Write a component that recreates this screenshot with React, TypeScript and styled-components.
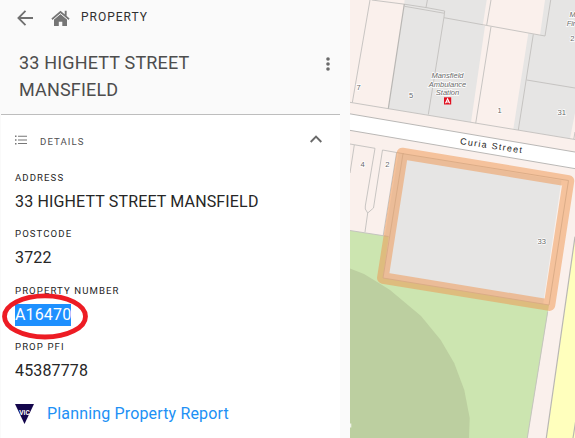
import React from "react";
import styled, { createGlobalStyle } from "styled-components";

const GlobalStyle = createGlobalStyle`
  * { box-sizing: border-box; }
  body { margin: 0; overflow: hidden; background: #fafafa; font-family: Roboto, "Liberation Sans", sans-serif; }
`;

const Page = styled.main`
  display: flex;
  width: 575px;
  height: 438px;
  overflow: hidden;
`;

const Sidebar = styled.aside`
  width: 350px;
  flex: none;
  display: flex;
  flex-direction: column;
  padding-right: 10px;
  background: #fafafa;
`;

const Toolbar = styled.header`
  display: flex;
  align-items: center;
  height: 36px;
  padding-left: 17px;
`;

const HomeSlot = styled.span`
  display: flex;
  margin: 0 11px 0 18px;
`;

const ToolbarTitle = styled.span`
  font-size: 12px;
  line-height: 16px;
  letter-spacing: 1px;
  color: #303030;
  margin-top: -3px;
`;

const TitleRow = styled.div`
  display: flex;
  justify-content: space-between;
  height: 78px;
  padding: 13px 9px 0 19px;
`;

const Title = styled.h1`
  width: 200px;
  margin: 0;
  font-size: 18px;
  font-weight: 400;
  line-height: 27px;
  letter-spacing: 0.17px;
  color: #4d4d4d;
`;

const MenuSlot = styled.span`
  margin-top: 7px;
`;

const Panel = styled.section`
  flex: 1;
  margin-left: 1px;
  padding: 0 14px;
  border-top: 1px solid #bdbdbd;
  background: #fff;
`;

const PanelHeader = styled.div`
  display: flex;
  align-items: center;
  height: 52px;
  padding-right: 4px;
`;

const ListSlot = styled.span`
  display: flex;
  margin-top: -3px;
`;

const ChevronSlot = styled.span`
  display: flex;
  margin-top: -4px;
`;

const PanelTitle = styled.span`
  flex: 1;
  margin-left: 13px;
  padding-top: 2px;
  font-size: 9.6px;
  line-height: 14px;
  letter-spacing: 1.1px;
  color: #505050;
`;

const Fields = styled.dl`
  margin: 4px 0 0;
`;

const Field = styled.div`
  height: 56.4px;
`;

const Label = styled.dt`
  font-size: 9.6px;
  line-height: 14px;
  letter-spacing: 1.08px;
  color: #1f1f1f;
`;

const Value = styled.dd<{ $selected?: boolean }>`
  position: relative;
  width: fit-content;
  margin: 6px 0 0;
  font-size: 16px;
  line-height: 22px;
  letter-spacing: 0.15px;
  white-space: nowrap;
  color: ${(p) => (p.$selected ? "#fff" : "#262626")};
  background: ${(p) => (p.$selected ? "#1e90ff" : "transparent")};
`;

const Ring = styled.svg`
  position: absolute;
  left: -14px;
  top: -12px;
  overflow: visible;
`;

const ReportLink = styled.a`
  display: flex;
  align-items: center;
  gap: 13px;
  height: 24px;
  margin-top: 5px;
  font-size: 16px;
  letter-spacing: 0.16px;
  color: #2090f5;
`;

const MapView = styled.svg`
  display: block;
  flex: none;
`;

const MapLabel = styled.text`
  font-family: "Liberation Sans", sans-serif;
  font-size: 7.6px;
  fill: #686868;
  stroke: #fff;
  stroke-width: 1.5px;
  paint-order: stroke;
  text-anchor: middle;
`;

const PlaceLabel = styled(MapLabel)`
  font-size: 7.5px;
  font-style: italic;
`;

const StreetLabel = styled.text`
  font-family: "Liberation Sans", sans-serif;
  font-size: 9px;
  letter-spacing: 1.3px;
  fill: #222;
`;

const fields = [
  { label: "ADDRESS", value: "33 HIGHETT STREET MANSFIELD" },
  { label: "POSTCODE", value: "3722" },
  { label: "PROPERTY NUMBER", value: "A16470", selected: true },
  { label: "PROP PFI", value: "45387778" },
];

const BackIcon = () => (
  <svg width="16" height="16" viewBox="0 0 16 16" fill="none" stroke="#707070" strokeWidth="1.8">
    <path d="M16 8H2M8.5 .9 1.4 8l7.1 7.1" />
  </svg>
);

const HomeIcon = () => (
  <svg width="19" height="17" viewBox="0 0 19 17" fill="#757575">
    <path d="M9.5 3.9 3 9.3V16h4.8v-4.3h3.5V16H16V9.3Z" />
    <path d="M1 9.2 9.5 2l8.5 7.2M14.7.8v5" fill="none" stroke="#757575" strokeWidth="1.9" />
    <path d="M2.1 9.9 9.5 3.7l7.4 6.2" fill="none" stroke="#fafafa" strokeWidth=".7" />
  </svg>
);

const DotsIcon = () => (
  <svg width="6" height="14" viewBox="0 0 6 14" fill="#6a6a6a">
    <circle cx="3" cy="2" r="1.8" />
    <circle cx="3" cy="7" r="1.8" />
    <circle cx="3" cy="12" r="1.8" />
  </svg>
);

const ListIcon = () => (
  <svg width="12" height="10" viewBox="0 0 12 10" fill="#777">
    <path d="M3 .8h9v1H3zM3 4.5h9v1H3zM3 8.1h9v1H3zM0 .5h1.5V2H0zM0 4.2h1.5v1.5H0zM0 7.9h1.5v1.5H0z" />
  </svg>
);

const ChevronIcon = () => (
  <svg width="12" height="8" viewBox="0 0 12 8" fill="none" stroke="#6a6a6a" strokeWidth="1.9">
    <path d="m.7 7 5.3-5.3L11.3 7" />
  </svg>
);

const VicIcon = () => (
  <svg width="19" height="20" viewBox="0 0 19 20">
    <path d="M0 0h19L9.5 20Z" fill="#14064c" />
    <text x="9.6" y="11" textAnchor="middle" fontFamily="Roboto, sans-serif" fontSize="6.5" fontWeight="700" fill="#fff">VIC</text>
  </svg>
);

const PropertyMap = () => (
  <MapView width="225" height="438" viewBox="350 0 225 438">
    <path fill="#faf0ec" d="M350 0h225v438H350z" />
    <g fill="#e6e5e4">
      <path d="M404.5 0H486.7L482.7 25.5 485 26 471 122.3 388.3 108.7 404.3 4Z" />
      <path d="M545 0h30v113l-5 25.5L513.3 129.3 528.3 33.3l11.7 2Z" />
      <path d="M398.5 153 561.5 180.5 543 305 378 278Z" />
    </g>
    <path fill="#cce5b0" d="M350 230.5 388.8 236.5 383 278 549 305 527.4 438H350Z" />
    <path fill="#bccfa0" d="m350 268.5 14 5.5 14 8.5 12 7.5 31 26 19.7 24 13.6 23.3 10 26.7 5.4 28-.7 20H350Z" />
    <path fill="#ffffbd" d="M575 236.7 546.3 438H575Z" />
    <path fill="#fff" stroke="#bab8b6" d="M349 113.7 576 152.2V168.8L349 130.2Z" />
    <g fill="none" stroke="#c2bfbd" strokeWidth=".9">
      <path d="M370 0 352.3 102.7M371.7 0 403 4l24 3.7 17.7 3.3-.7 6-15.7 97.5M404.5 6.3 444 13.2M427.4 0 426 7.5M444 17.7 545 36M491 0l-4.3 25M491 26.7 475.7 123.3M550.7 0 545 36M533.3 34.3 518.3 130M526.7 80 575 88M345 101.5 575 139.5M575 132l-1.2 7" />
      <path d="m350 144 25 4.3-9.7 57.7v3l2.4 4 5.8-5 9-58 21.5 3.8M354.3 145 350 173M367.7 213 365 232M350 230.5l38.5 6M396.5 153 383.3 235M403 153.7 568.5 180.5 549 305 383 278ZM547.7 311.7 527.3 438" />
    </g>
    <path d="M404.3 4 388.3 108.7M575 236.7 546.3 438M576 419l-3 19" fill="none" stroke="#b9b7b4" strokeWidth="1.2" />
    <path d="M402.3 153.5 568.5 180.8 549.5 305.2 382.8 278Z" fill="none" stroke="#f0944c" strokeOpacity=".5" strokeWidth="11.5" strokeLinejoin="round" />
    <MapLabel x="358.7" y="90">7</MapLabel>
    <MapLabel x="411" y="98">5</MapLabel>
    <MapLabel x="499.5" y="113">1</MapLabel>
    <MapLabel x="561.7" y="114.5">31</MapLabel>
    <MapLabel x="362.5" y="166.5">4</MapLabel>
    <MapLabel x="387.3" y="166.5">2</MapLabel>
    <MapLabel x="541.7" y="243.5">33</MapLabel>
    <MapLabel x="572.3" y="41">2</MapLabel>
    <PlaceLabel x="447.5" y="77.5">Mansfield</PlaceLabel>
    <PlaceLabel x="447.5" y="86.5">Ambulance</PlaceLabel>
    <PlaceLabel x="447.5" y="95">Station</PlaceLabel>
    <PlaceLabel x="572.5" y="17">M</PlaceLabel>
    <PlaceLabel x="571" y="25.5">Fir</PlaceLabel>
    <path fill="#e01020" d="M444 97.3h7.2v7.2H444z" />
    <path fill="none" stroke="#fff" strokeWidth="1.1" d="m445.5 103.3 2.1-4.5 2.1 4.5M446.3 102h2.6" />
    <StreetLabel transform="translate(459.8 144) rotate(8.5)">Curia Street</StreetLabel>
    <path fill="#eef3e8" d="M350 423.5h1.3v4H350z" />
  </MapView>
);

export default function App() {
  return (
    <>
      <GlobalStyle />
      <Page>
        <Sidebar>
          <Toolbar>
            <BackIcon />
            <HomeSlot><HomeIcon /></HomeSlot>
            <ToolbarTitle>PROPERTY</ToolbarTitle>
          </Toolbar>
          <TitleRow>
            <Title>33 HIGHETT STREET MANSFIELD</Title>
            <MenuSlot><DotsIcon /></MenuSlot>
          </TitleRow>
          <Panel>
            <PanelHeader>
              <ListSlot><ListIcon /></ListSlot>
              <PanelTitle>DETAILS</PanelTitle>
              <ChevronSlot><ChevronIcon /></ChevronSlot>
            </PanelHeader>
            <Fields>
              {fields.map((f) => (
                <Field key={f.label}>
                  <Label>{f.label}</Label>
                  <Value $selected={f.selected}>
                    {f.value}
                    {f.selected && (
                      <Ring width="88" height="48" viewBox="0 0 88 48">
                        <ellipse cx="44" cy="24.4" rx="40.5" ry="20.6" fill="none" stroke="#ed1c24" strokeWidth="4.8" />
                      </Ring>
                    )}
                  </Value>
                </Field>
              ))}
            </Fields>
            <ReportLink>
              <VicIcon />
              Planning Property Report
            </ReportLink>
          </Panel>
        </Sidebar>
        <PropertyMap />
      </Page>
    </>
  );
}
